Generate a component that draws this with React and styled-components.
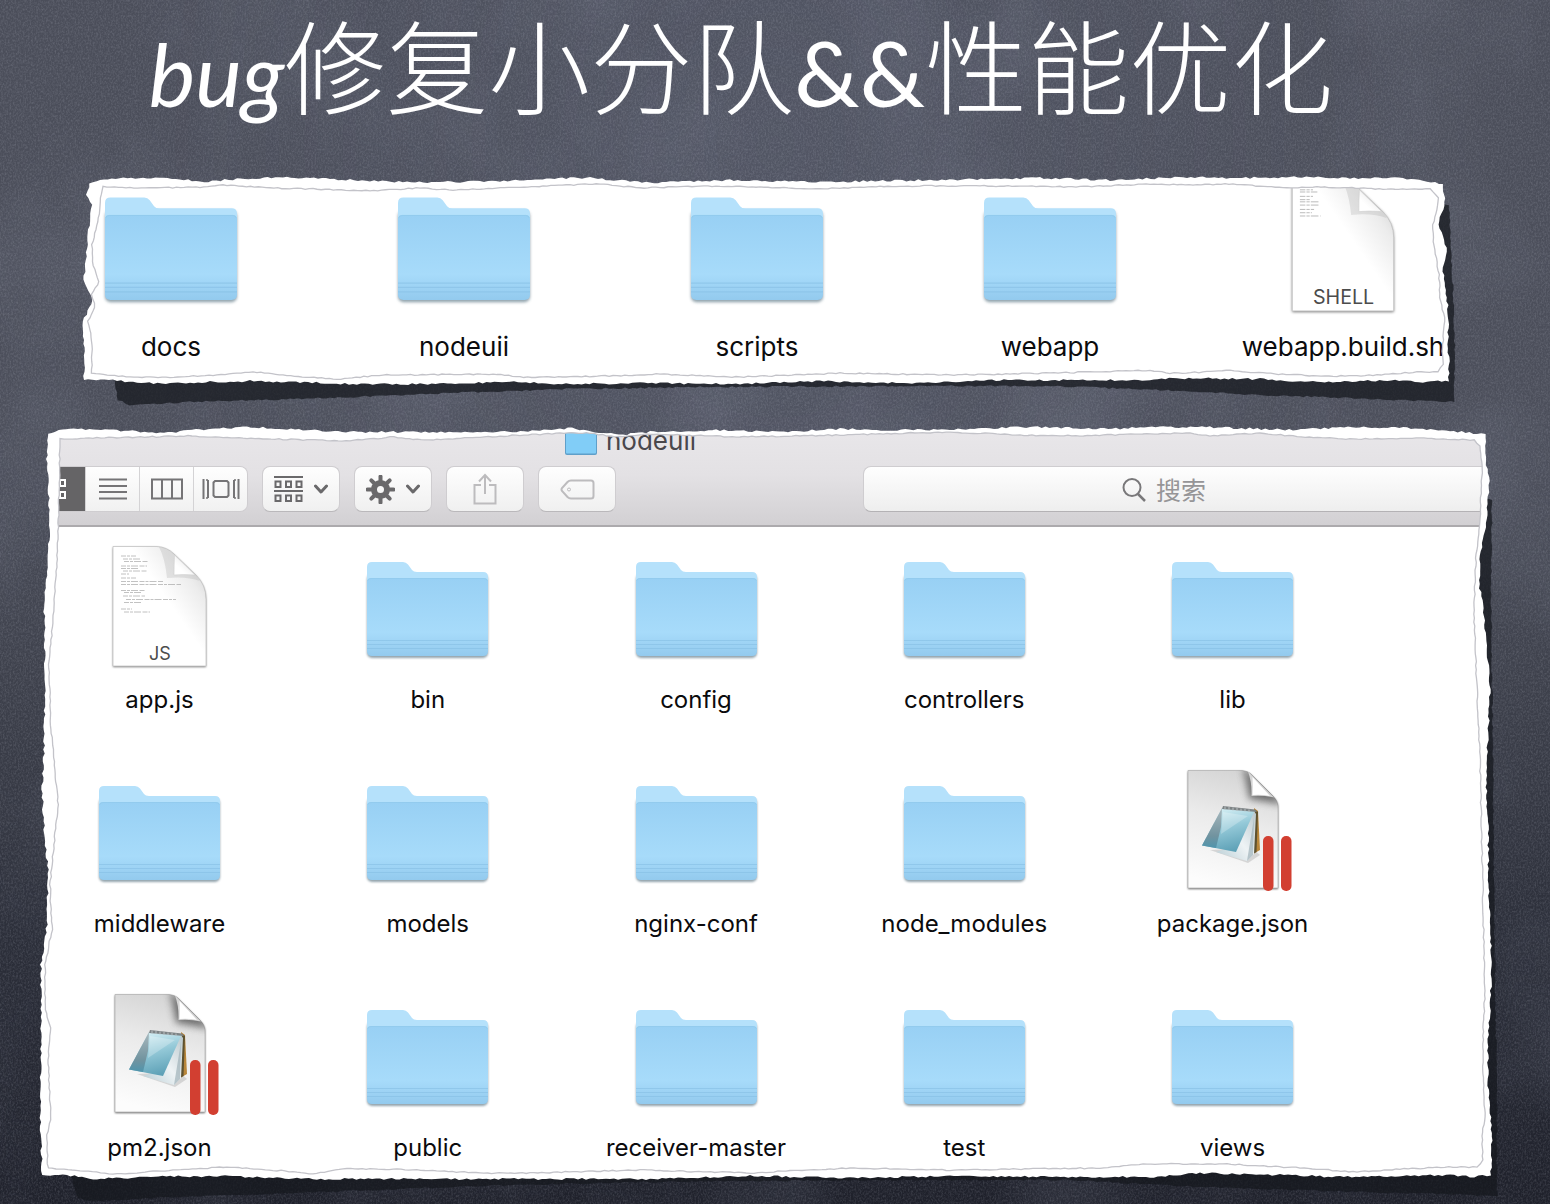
import React, { useId } from "react";
import styled, { createGlobalStyle } from "styled-components";

const GlobalStyle = createGlobalStyle`
  *, *::before, *::after { box-sizing: border-box; }
  body {
    margin: 0;
    background: #22242e;
    font-family: Inter, "Liberation Sans", "Noto Sans CJK SC", sans-serif;
    color: #0b0b0d;
  }
`;

/* ---------- torn paper outlines ---------- */

function seeded(seed) {
  let s = seed;
  return () => {
    s = (s * 16807) % 2147483647;
    return s / 2147483647;
  };
}

function roughen(points, jitter, seed) {
  const rand = seeded(seed);
  const out = [];
  points.forEach(([x, y], i) => {
    const [nx, ny] = points[(i + 1) % points.length];
    const length = Math.hypot(nx - x, ny - y);
    const steps = Math.max(1, Math.round(length / 4));
    for (let k = 0; k < steps; k += 1) {
      const t = k / steps;
      const off = (rand() - 0.5) * 2 * jitter;
      out.push([
        x + (nx - x) * t - ((ny - y) / length) * off,
        y + (ny - y) * t + ((nx - x) / length) * off,
      ]);
    }
  });
  return out;
}

function makeSheet({ x, y, width, height, outer, inner, shadow, seed }) {
  const shift = (list) => list.map(([px, py]) => [px - x, py - y]);
  const toPoints = (list) =>
    list.map(([px, py]) => `${px.toFixed(1)},${py.toFixed(1)}`).join(" ");
  const innerPts = roughen(shift(inner), 0.6, seed + 7);
  return {
    width,
    height,
    outer: toPoints(roughen(shift(outer), 1, seed)),
    inner: toPoints(innerPts),
    shadow: toPoints(roughen(shift(shadow), 0.8, seed + 3)),
    clip: `polygon(${innerPts
      .map(
        ([px, py]) =>
          `${((px / width) * 100).toFixed(3)}% ${((py / height) * 100).toFixed(3)}%`
      )
      .join(", ")})`,
  };
}

const stripSheet = makeSheet({
  x: 82, y: 177, width: 1368, height: 208, seed: 41,
  outer: [
    [87, 195], [89, 183], [100, 179], [147, 178], [180, 179], [200, 182], [237, 179], [283, 177],
    [310, 178], [370, 181], [407, 182], [460, 182], [500, 181], [570, 178], [590, 178], [650, 183],
    [730, 180], [820, 182], [930, 180], [1040, 178], [1110, 180], [1187, 177], [1230, 178],
    [1310, 177], [1350, 178], [1403, 178], [1423, 181], [1443, 184], [1445, 202], [1438, 225],
    [1447, 248], [1443, 272], [1447, 298], [1449, 325], [1447, 345], [1449, 362], [1449, 382],
    [1427, 383], [1403, 381], [1317, 383], [1260, 380], [1173, 379], [1150, 381], [1000, 381],
    [900, 384], [820, 382], [740, 385], [640, 384], [570, 385], [510, 383], [420, 385], [353, 385],
    [300, 383], [250, 382], [170, 384], [137, 384], [113, 381], [84, 381], [84, 352], [83, 322],
    [90, 308], [92, 298], [84, 280], [87, 245], [90, 222], [92, 205],
  ],
  inner: [
    [101, 198], [103, 187], [153, 188], [200, 187], [223, 185], [270, 188], [313, 189], [370, 191],
    [420, 188], [453, 190], [520, 187], [570, 185], [600, 184], [640, 188], [720, 186], [820, 189],
    [900, 186], [1000, 186], [1080, 187], [1150, 184], [1193, 185], [1233, 184], [1283, 188],
    [1317, 187], [1383, 189], [1430, 189], [1439, 198], [1433, 225], [1433, 242], [1439, 275],
    [1440, 298], [1445, 322], [1442, 352], [1443, 365], [1438, 373], [1417, 373], [1357, 377],
    [1317, 377], [1263, 374], [1230, 371], [1203, 373], [1170, 374], [1150, 371], [1050, 374],
    [950, 376], [840, 374], [740, 378], [660, 375], [570, 378], [520, 378], [497, 375], [383, 376],
    [337, 380], [283, 376], [257, 373], [213, 376], [170, 378], [130, 378], [92, 374], [92, 342],
    [88, 322], [95, 308], [92, 295], [99, 282], [92, 262], [92, 245], [98, 222],
  ],
  shadow: [
    [112, 370], [118, 401], [130, 406], [190, 403], [330, 399], [450, 394], [570, 390], [700, 388],
    [900, 387], [1050, 387], [1160, 391], [1260, 396], [1350, 399], [1454, 403], [1455, 350],
    [1453, 290], [1449, 205], [1430, 205], [1430, 370],
  ],
});

const windowSheet = makeSheet({
  x: 39, y: 427, width: 1454, height: 753, seed: 97,
  outer: [
    [47, 460], [48, 434], [66, 430], [109, 431], [164, 434], [196, 431], [251, 428], [307, 431],
    [346, 433], [425, 433], [485, 433], [536, 432], [572, 429], [595, 433], [619, 436], [650, 433],
    [720, 431], [780, 433], [840, 430], [885, 431], [962, 430], [1030, 428], [1112, 430],
    [1148, 428], [1202, 428], [1293, 431], [1352, 428], [1415, 429], [1485, 435], [1486, 462],
    [1489, 482], [1487, 520], [1480, 560], [1479, 585], [1483, 605], [1487, 650], [1490, 690],
    [1487, 760], [1486, 780], [1488, 830], [1489, 900], [1491, 950], [1491, 987], [1488, 1047],
    [1488, 1090], [1492, 1133], [1491, 1175], [1470, 1177], [1450, 1175], [1340, 1177],
    [1280, 1175], [1200, 1173], [1150, 1177], [1080, 1177], [950, 1176], [850, 1178], [750, 1176],
    [650, 1179], [530, 1179], [380, 1179], [313, 1179], [217, 1176], [147, 1177], [97, 1179],
    [67, 1175], [42, 1175], [40, 1110], [41, 1045], [41, 965], [47, 925], [48, 870], [44, 830],
    [42, 790], [44, 750], [45, 680], [44, 597], [48, 560], [50, 530],
  ],
  inner: [
    [59, 500], [60, 440], [93, 439], [188, 437], [235, 439], [307, 441], [342, 442], [394, 438],
    [425, 441], [504, 437], [564, 434], [590, 434], [615, 438], [650, 435], [740, 438], [840, 436],
    [950, 433], [1020, 436], [1060, 437], [1190, 434], [1210, 437], [1260, 434], [1293, 437],
    [1342, 440], [1420, 439], [1474, 441], [1480, 447], [1482, 470], [1480, 527], [1476, 555],
    [1474, 615], [1477, 690], [1480, 760], [1482, 850], [1484, 950], [1485, 987], [1483, 1040],
    [1483, 1070], [1485, 1113], [1482, 1140], [1483, 1160], [1477, 1167], [1453, 1167],
    [1400, 1169], [1357, 1172], [1300, 1168], [1227, 1164], [1147, 1164], [1100, 1168], [950, 1170],
    [850, 1168], [750, 1173], [640, 1170], [530, 1173], [480, 1173], [397, 1169], [343, 1169],
    [313, 1174], [273, 1170], [227, 1167], [177, 1170], [117, 1174], [80, 1171], [48, 1168],
    [47, 1135], [51, 1120], [48, 1060], [51, 1028], [45, 1010], [45, 965], [52, 930], [50, 885],
    [54, 845], [58, 805], [57, 790], [51, 730], [49, 665], [53, 620], [57, 560],
  ],
  shadow: [
    [68, 1165], [78, 1198], [90, 1201], [180, 1197], [320, 1192], [480, 1186], [640, 1182],
    [900, 1180], [1070, 1180], [1180, 1186], [1300, 1190], [1400, 1193], [1497, 1196], [1497, 1100],
    [1494, 900], [1493, 760], [1491, 600], [1492, 500], [1470, 500], [1470, 1165],
  ],
});

/* ---------- layout ---------- */

const Board = styled.main`
  position: relative;
  min-height: 100vh;
  display: flex;
  flex-direction: column;
  padding-bottom: 24px;
  background:
    radial-gradient(ellipse at 50% 12%, rgba(110, 116, 140, 0.2), rgba(110, 116, 140, 0) 60%),
    linear-gradient(#4b4e5a 0%, #4c4f5b 38%, #3d404b 58%, #2c2f3a 78%, #1f212b 100%);
`;

const Chalk = styled.svg`
  position: absolute;
  inset: 0;
  width: 100%;
  height: 100%;
  pointer-events: none;
`;

const Title = styled.h1`
  position: relative;
  margin: 0;
  height: 177px;
  padding: 8px 68px 0 0;
  text-align: center;
  white-space: nowrap;
  font-family: Lato, "Noto Sans CJK SC", sans-serif;
  font-size: 102px;
  line-height: 120px;
  font-weight: 300;
  color: #fff;
`;

const Latin = styled.span`
  font-family: Lato, "Liberation Sans", sans-serif;
  font-style: ${(p) => (p.$slanted ? "italic" : "normal")};
  font-weight: 400;
  font-size: ${(p) => (p.$slanted ? "88px" : "92px")};
`;

const Sheet = styled.section`
  position: relative;
  margin: ${(p) => p.$margin};
`;

const SheetArt = styled.svg`
  position: absolute;
  inset: 0;
  width: 100%;
  height: 100%;
  overflow: visible;
  pointer-events: none;
`;

const SheetBody = styled.div`
  position: relative;
  overflow: hidden;
  clip-path: ${(p) => p.$clip};
`;

const Strip = styled.ul`
  list-style: none;
  margin: 0;
  display: flex;
  justify-content: space-between;
  padding: 3px 41px 21px 23px;
`;

const Files = styled.ul`
  list-style: none;
  margin: 0;
  display: grid;
  grid-template-columns: repeat(5, 121px);
  justify-content: space-between;
  row-gap: 54px;
  padding: 19px 200px 16px 60px;
`;

const Item = styled.li`
  display: flex;
  flex-direction: column;
  align-items: center;
  gap: ${(p) => (p.$large ? 18 : 16)}px;
  width: ${(p) => (p.$large ? 132 : 121)}px;
  font-size: ${(p) => (p.$large ? 26 : 24)}px;
  line-height: 32px;
  white-space: nowrap;
`;

const Glyph = styled.svg`
  display: block;
  flex: none;
  width: 100%;
  aspect-ratio: 121 / 122;
  overflow: visible;
`;

const Header = styled.header`
  background: linear-gradient(#e9e7ea 0%, #e3e1e4 50%, #d2d0d3 100%);
  border-bottom: 2px solid #acaaad;
`;

const WindowTitle = styled.h2`
  margin: 0;
  height: 40px;
  padding: 0 271px 10px 0;
  display: flex;
  align-items: center;
  justify-content: center;
  gap: 9px;
  font-size: 26px;
  line-height: 30px;
  font-weight: 400;
  color: #49474c;
`;

const Toolbar = styled.div`
  display: flex;
  align-items: center;
  height: 59px;
  padding-bottom: 13px;
  gap: 14px;
`;

const Segments = styled.div`
  display: flex;
  height: 46px;
  border-radius: 8px;
  border: 1px solid #cfcdd0;
  border-left: 0;
  overflow: hidden;
`;

const Segment = styled.button`
  display: flex;
  align-items: center;
  justify-content: ${(p) => (p.$active ? "flex-end" : "center")};
  width: ${(p) => (p.$active ? 46 : 54)}px;
  padding: ${(p) => (p.$active ? "0 19px 0 0" : 0)};
  border: 0;
  border-left: 1px solid #d4d3d5;
  background: ${(p) => (p.$active ? "#656466" : "linear-gradient(#fefefe, #f1f1f1)")};
  color: ${(p) => (p.$active ? "#fff" : "#757476")};
`;

const ToolButton = styled.button`
  display: flex;
  align-items: center;
  justify-content: center;
  gap: 11px;
  width: 78px;
  height: 46px;
  padding: 0;
  border: 1px solid #cfcdd0;
  border-bottom-color: #bab8bb;
  border-radius: 8px;
  background: linear-gradient(#fefefe, #f0f0f0);
  color: ${(p) => (p.$muted ? "#bdbcbe" : "#6a696b")};
`;

const Search = styled.label`
  flex: 1;
  min-width: 0;
  margin-left: 233px;
  height: 46px;
  padding-left: 258px;
  display: flex;
  align-items: center;
  gap: 10px;
  border: 1px solid #cfcdd0;
  border-bottom-color: #b4b2b5;
  border-radius: 8px;
  background: linear-gradient(#fefefe, #eeeeee);
  color: #79787a;
`;

const SearchInput = styled.input`
  flex: 1;
  min-width: 0;
  height: 40px;
  padding: 0;
  border: 0;
  outline: 0;
  background: transparent;
  font-family: "Noto Sans CJK SC", sans-serif;
  font-size: 25px;
  color: #444;
  &::placeholder { color: #969597; opacity: 1; }
`;

const Icon = styled.svg`
  display: block;
  flex: none;
  fill: none;
  stroke: currentColor;
  stroke-width: 2;
`;

/* ---------- icons ---------- */

function SoftShadow({ id }) {
  return (
    <filter id={id} x="-10%" y="-10%" width="120%" height="120%">
      <feGaussianBlur stdDeviation="1.3" />
    </filter>
  );
}

function FolderIcon() {
  const id = useId();
  return (
    <Glyph viewBox="0 0 121 122" aria-hidden="true">
      <defs>
        <SoftShadow id={`${id}b`} />
        <linearGradient id={id} x1="0" y1="0" x2="0" y2="1">
          <stop offset="0" stopColor="#98d0f4" />
          <stop offset="0.7" stopColor="#a7dbfa" />
          <stop offset="1" stopColor="#93caee" />
        </linearGradient>
      </defs>
      <rect x="0" y="28" width="121" height="84" rx="5" fill="#28485c" opacity="0.5" filter={`url(#${id}b)`} />
      <path d="M0 21 Q0 16 5 16 H36 Q39 16 41 18.500 L45 24 Q46.500 26 50 26 H116 Q121 26 121 31 V60 H0 Z" fill="#b5e1fb" />
      <path d="M0 36 Q0 32 4 32 H117 Q121 32 121 36 V105 Q121 110 116 110 H5 Q0 110 0 105 Z" fill={`url(#${id})`} />
      <path d="M0.500 35 Q1 32.500 4 32.500 H117 Q120 32.500 120.500 35" fill="none" stroke="#8fc7ea" strokeWidth="0.6" />
      <path d="M0 94.500 H121 M0 98.500 H121 M0 102.500 H121" stroke="#86bfe4" strokeWidth="1.200" opacity="0.6" />
    </Glyph>
  );
}

const CODE_LINES = [
  [22, 10, 15], [24, 13, 18], [25, 15.5, 24], [22, 20, 26], [22, 22.5, 17], [24, 25, 24], [22, 28, 8],
  [22, 32, 15], [22, 35.5, 42], [22, 38.5, 60], [22, 44.5, 24], [25, 46.5, 18], [24, 50, 22],
  [27, 53.5, 50], [25, 56.5, 18], [22, 63, 11], [25, 66, 26],
];
const SCRIPT_LINES = [
  [21, 9, 12], [21, 11, 16], [21, 15, 12], [21, 18, 10], [21, 20, 17], [21, 23, 18], [21, 27, 13],
  [21, 30, 11], [21, 33, 19],
];

const TEXT_PAGE = "M14 0.500 H58 Q68 1 75 8 L97 29 Q107 39 107 53 V120 H14 Z";

function TextDocIcon({ kind }) {
  const id = useId();
  const lines = kind === "SHELL" ? SCRIPT_LINES : CODE_LINES;
  return (
    <Glyph viewBox="0 0 121 122" aria-hidden="true">
      <defs>
        <SoftShadow id={`${id}b`} />
        <linearGradient id={`${id}p`} x1="1" y1="0.1" x2="0.55" y2="0.5">
          <stop offset="0" stopColor="#cfcfcf" />
          <stop offset="0.4" stopColor="#ececec" />
          <stop offset="0.9" stopColor="#ffffff" />
        </linearGradient>
        <linearGradient id={`${id}f`} x1="0" y1="1" x2="1" y2="0">
          <stop offset="0.3" stopColor="#ffffff" />
          <stop offset="1" stopColor="#dddddd" />
        </linearGradient>
      </defs>
      <path d={TEXT_PAGE} transform="translate(0 1)" fill="#000" opacity="0.55" filter={`url(#${id}b)`} />
      <path d={TEXT_PAGE} fill={`url(#${id}p)`} stroke="#c4c4c4" strokeWidth="0.8" />
      <path d="M60 1 Q66 12 68 32 Q88 30 101 35 L97 29 L75 8 Q68 2 60 1 Z" fill="#a8a8a8" opacity="0.28" />
      <path d="M75.500 9 Q75 20 75 29 Q84 28 96 29 Z" fill={`url(#${id}f)`} stroke="#d0d0d0" strokeWidth="0.6" />
      {lines.map(([x, y, w]) => (
        <path key={y} d={`M${x} ${y} h${w}`} stroke="#8d8d8d" strokeWidth="0.9" strokeDasharray="5 1 3 1 7 1.500" opacity="0.6" />
      ))}
      <text x="61" y="114" textAnchor="middle" fontFamily="Inter, sans-serif" fontSize="18" fill="#4c4c4c">
        {kind}
      </text>
    </Glyph>
  );
}

const NOTE_PAGE = "M16 0.500 H70 Q76 1 79 4 L101 26 Q106 31 106 36 V118 H16 Z";

function NotepadDocIcon() {
  const id = useId();
  return (
    <Glyph viewBox="0 0 121 122" aria-hidden="true">
      <defs>
        <SoftShadow id={`${id}b`} />
        <clipPath id={`${id}c`}>
          <path d={NOTE_PAGE} />
        </clipPath>
        <linearGradient id={`${id}p`} x1="0.7" y1="0" x2="0.5" y2="1">
          <stop offset="0" stopColor="#d3d3d3" />
          <stop offset="0.45" stopColor="#ebebeb" />
          <stop offset="1" stopColor="#fcfcfc" />
        </linearGradient>
        <linearGradient id={`${id}g`} x1="0.3" y1="0" x2="0.6" y2="1">
          <stop offset="0" stopColor="#d9f1f6" />
          <stop offset="0.45" stopColor="#94c9d8" />
          <stop offset="1" stopColor="#5b9fb5" />
        </linearGradient>
        <linearGradient id={`${id}d`} x1="0" y1="0" x2="0" y2="1">
          <stop offset="0" stopColor="#a9b8bd" />
          <stop offset="0.7" stopColor="#71939f" />
          <stop offset="1" stopColor="#4f95ad" />
        </linearGradient>
        <linearGradient id={`${id}w`} x1="0" y1="1" x2="1" y2="0">
          <stop offset="0" stopColor="#b8cdd4" />
          <stop offset="0.5" stopColor="#eef3f5" />
          <stop offset="1" stopColor="#b9c7cc" />
        </linearGradient>
        <filter id={`${id}s`} x="-50%" y="-50%" width="200%" height="200%">
          <feGaussianBlur stdDeviation="3.5" />
        </filter>
      </defs>
      <path d={NOTE_PAGE} transform="translate(0 1)" fill="#000" opacity="0.65" filter={`url(#${id}b)`} />
      <path d={NOTE_PAGE} fill={`url(#${id}p)`} stroke="#b5b5b5" strokeWidth="0.8" />
      <g clipPath={`url(#${id}c)`}>
        <path d="M74 2 L79 27 L106 32 L100 20 Z" fill="#333" stroke="#555" strokeWidth="5" opacity="0.7" filter={`url(#${id}s)`} />
      </g>
      <path d="M76 1.500 Q80 12 79.500 26 Q91 25 102 27.500 Z" fill="#d5d5d5" />
      <path d="M80.500 7 Q81 17 80.500 25 Q89 24 98 26 Z" fill="#fff" />
      <path d="M38 80 L76 93 L88 85 L80 78 Z" fill="#777" opacity="0.25" />
      <path d="M82 38 L86 41 L88 80 L81 84 Z" fill="#b8863a" />
      <path d="M83 40 L86 42 L84.500 82 L81 84 Z" fill="#5d5130" />
      <path d="M82 41 L84 44 L82 84 L75 91 L44 82 L64 76 Z" fill={`url(#${id}w)`} />
      <path d="M82 48 L81 85 L75 91 Z" fill="#9fb2b9" opacity="0.7" />
      <path d="M50 38 L82.500 41 L64 82 L30 75.500 Z" fill={`url(#${id}g)`} />
      <path d="M50 38 L49 57 L44 78 L30 75.500 Z" fill={`url(#${id}d)`} />
      <path d="M51 42 L76 46 L49 64 Z" fill="#fff" opacity="0.25" />
      <path d="M51 36 L83 39.500 L85 42 L50 39 Z" fill="#7d8385" />
      <path d="M53 36.500 V39.500 M57 37 V40 M61 37.500 V40.500 M65 38 V41 M69 38.500 V41 M73 39 V41.500 M77 39.500 V42" stroke="#b9bfc1" strokeWidth="1" />
      <rect x="91" y="66" width="10.500" height="55" rx="5" fill="#d23f31" />
      <rect x="109" y="66" width="10.500" height="55" rx="5" fill="#d23f31" />
    </Glyph>
  );
}

function FileIcon({ type }) {
  if (type === "folder") return <FolderIcon />;
  if (type === "notepad") return <NotepadDocIcon />;
  return <TextDocIcon kind={type} />;
}

const Chevron = () => (
  <Icon width="14" height="10" viewBox="0 0 14 10">
    <path d="M1.500 2 L7 8 L12.500 2" strokeWidth="3" strokeLinecap="round" strokeLinejoin="round" />
  </Icon>
);

const GridIcon = () => (
  <Icon width="18" height="22" viewBox="0 0 18 22">
    <path d="M1 2 H6 V8 H1 Z M12 2 H17 V8 H12 Z M1 14 H6 V20 H1 Z M12 14 H17 V20 H12 Z" />
  </Icon>
);
const ListIcon = () => (
  <Icon width="28" height="22" viewBox="0 0 28 22">
    <path d="M0 1.500 H28 M0 8 H28 M0 14 H28 M0 20.500 H28" />
  </Icon>
);
const ColumnsIcon = () => (
  <Icon width="32" height="22" viewBox="0 0 32 22">
    <path d="M1 1.500 H31 V20.500 H1 Z M11 1.500 V20.500 M21 1.500 V20.500" />
  </Icon>
);
const CoverFlowIcon = () => (
  <Icon width="38" height="24" viewBox="0 0 38 24">
    <path d="M1.500 2 V22 M6 3 V21 M32 3 V21 M36.500 2 V22" />
    <path d="M4 3 H6 M4 21 H6 M32 3 H34 M32 21 H34" strokeWidth="1.500" />
    <path d="M13 4 H25 L26.500 5.500 V18.500 L25 20 H13 L11.500 18.500 V5.500 Z" />
  </Icon>
);
const ArrangeIcon = () => (
  <Icon width="29" height="27" viewBox="0 0 29 27">
    <path d="M0 1 H29 M0 15 H29" />
    <path d="M1.500 5.500 H6.500 V11 H1.500 Z M12 5.500 H17 V11 H12 Z M22.500 5.500 H27.500 V11 H22.500 Z M1.500 19.500 H6.500 V25 H1.500 Z M12 19.500 H17 V25 H12 Z M22.500 19.500 H27.500 V25 H22.500 Z" />
  </Icon>
);
const GearIcon = () => (
  <Icon width="29" height="29" viewBox="0 0 29 29">
    <circle cx="14.500" cy="14.500" r="6.500" strokeWidth="6" />
    {[0, 45, 90, 135, 180, 225, 270, 315].map((a) => (
      <path key={a} d="M14.500 1.500 V6" strokeWidth="4" strokeLinecap="round" transform={`rotate(${a} 14.500 14.500)`} />
    ))}
  </Icon>
);
const ShareIcon = () => (
  <Icon width="24" height="32" viewBox="0 0 24 32">
    <path d="M8 12 H1.500 V30.500 H22.500 V12 H16 M12 21 V2.500 M6 8.500 L12 2 L18 8.500" />
  </Icon>
);
const TagIcon = () => (
  <Icon width="35" height="21" viewBox="0 0 35 21">
    <path d="M11 1.500 H31 Q33.500 1.500 33.500 4 V17 Q33.500 19.500 31 19.500 H11 Q9 19.500 7.500 18 L2 12 Q1 10.500 2 9 L7.500 3 Q9 1.500 11 1.500 Z" />
    <circle cx="9" cy="10.500" r="1.500" strokeWidth="1" />
  </Icon>
);
const SearchIcon = () => (
  <Icon width="24" height="25" viewBox="0 0 24 25">
    <circle cx="10" cy="10.500" r="8.500" />
    <path d="M16 17 L23 24" strokeWidth="2.500" />
  </Icon>
);
const TitleFolder = () => (
  <svg width="32" height="28" viewBox="0 0 32 28" aria-hidden="true">
    <rect width="32" height="28" rx="2" fill="#5f9fc9" />
    <rect x="1" width="30" height="26.500" rx="1" fill="#81cdf7" />
  </svg>
);

/* ---------- data ---------- */

const ROOT_FILES = [
  ["docs", "folder"],
  ["nodeuii", "folder"],
  ["scripts", "folder"],
  ["webapp", "folder"],
  ["webapp.build.sh", "SHELL"],
];

const PROJECT_FILES = [
  ["app.js", "JS"],
  ["bin", "folder"],
  ["config", "folder"],
  ["controllers", "folder"],
  ["lib", "folder"],
  ["middleware", "folder"],
  ["models", "folder"],
  ["nginx-conf", "folder"],
  ["node_modules", "folder"],
  ["package.json", "notepad"],
  ["pm2.json", "notepad"],
  ["public", "folder"],
  ["receiver-master", "folder"],
  ["test", "folder"],
  ["views", "folder"],
];

function TornSheet({ sheet, margin, children }) {
  const box = `0 0 ${sheet.width} ${sheet.height}`;
  return (
    <Sheet $margin={margin}>
      <SheetArt viewBox={box} preserveAspectRatio="none" aria-hidden="true">
        <polygon points={sheet.shadow} fill="#15171d" opacity="0.72" />
        <polygon points={sheet.outer} fill="#fff" />
      </SheetArt>
      <SheetBody $clip={sheet.clip}>{children}</SheetBody>
      <SheetArt viewBox={box} preserveAspectRatio="none" aria-hidden="true">
        <polygon points={sheet.inner} fill="none" stroke="#c3c3c9" strokeWidth="1.300" />
      </SheetArt>
    </Sheet>
  );
}

export default function App() {
  return (
    <Board>
      <GlobalStyle />
      <Chalk aria-hidden="true">
        <filter id="grain" x="0" y="0" width="100%" height="100%">
          <feTurbulence type="fractalNoise" baseFrequency="0.6 0.45" numOctaves="3" seed="4" />
          <feColorMatrix values="0 0 0 0 0.75  0 0 0 0 0.78  0 0 0 0 0.88  1.2 0 0 0 -0.45" />
        </filter>
        <filter id="smudge" x="0" y="0" width="100%" height="100%">
          <feTurbulence type="fractalNoise" baseFrequency="0.006 0.005" numOctaves="4" seed="9" />
          <feColorMatrix values="0 0 0 0 0.6  0 0 0 0 0.66  0 0 0 0 0.85  1.4 0 0 0 -0.6" />
        </filter>
        <rect width="100%" height="100%" filter="url(#smudge)" opacity="0.14" />
        <rect width="100%" height="100%" filter="url(#grain)" opacity="0.24" />
      </Chalk>

      <Title>
        <Latin $slanted>bug</Latin>修复小分队<Latin>&amp;&amp;</Latin>性能优化
      </Title>

      <TornSheet sheet={stripSheet} margin="0 100px 0 82px">
        <Strip>
          {ROOT_FILES.map(([name, type]) => (
            <Item key={name} $large>
              <FileIcon type={type} />
              {name}
            </Item>
          ))}
        </Strip>
      </TornSheet>

      <TornSheet sheet={windowSheet} margin="42px 57px 0 39px">
        <Header>
          <WindowTitle>
            <TitleFolder />
            nodeuii
          </WindowTitle>
          <Toolbar>
            <Segments>
              <Segment $active aria-label="图标"><GridIcon /></Segment>
              <Segment aria-label="列表"><ListIcon /></Segment>
              <Segment aria-label="分栏"><ColumnsIcon /></Segment>
              <Segment aria-label="封面流"><CoverFlowIcon /></Segment>
            </Segments>
            <ToolButton aria-label="排列"><ArrangeIcon /><Chevron /></ToolButton>
            <ToolButton aria-label="操作"><GearIcon /><Chevron /></ToolButton>
            <ToolButton $muted aria-label="共享"><ShareIcon /></ToolButton>
            <ToolButton $muted aria-label="标签"><TagIcon /></ToolButton>
            <Search>
              <SearchIcon />
              <SearchInput type="search" placeholder="搜索" aria-label="搜索" />
            </Search>
          </Toolbar>
        </Header>
        <Files>
          {PROJECT_FILES.map(([name, type]) => (
            <Item key={name}>
              <FileIcon type={type} />
              {name}
            </Item>
          ))}
        </Files>
      </TornSheet>
    </Board>
  );
}
